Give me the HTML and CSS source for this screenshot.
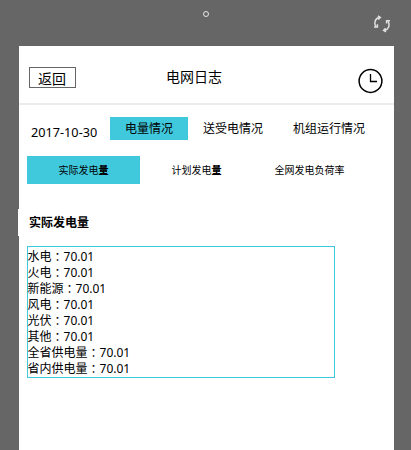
FILE: index.html
```html
<!DOCTYPE html>
<html lang="zh-CN">
<head>
<meta charset="utf-8">
<title>电网日志</title>
<link rel="stylesheet" href="styles.css">
</head>
<body>
<div class="device">
  <div class="bezel">
    <span class="camera"></span>
    <svg class="refresh" viewBox="0 0 18 18" fill="none" stroke="#e0e0e0" stroke-width="1.5">
      <path d="M6.3 2.4C2 3.2 0.8 8 2.8 11.2M1 12h3.4V9.2M4.9 0.9l2.4 1.5-2 2.2"/>
      <path d="M11.6 15.4C16 14.4 17.2 9.8 15.2 6.6M17 5.8h-3.4v2.8M13 16.9l-2.4-1.5 2-2.2"/>
    </svg>
  </div>
  <main class="screen">
    <header class="header">
      <button class="back">返回</button>
      <h1 class="title">电网日志</h1>
      <svg class="clock" viewBox="0 0 26 26" fill="none" stroke="#000">
        <circle cx="12.5" cy="13" r="11.4" stroke-width="1.5"/>
        <path d="M12.5 6v7.5h6.5" stroke-width="1.3"/>
      </svg>
    </header>
    <nav class="tabs">
      <span class="date">2017-10-30</span>
      <a class="tab active">电量情况</a>
      <a class="tab">送受电情况</a>
      <a class="tab">机组运行情况</a>
    </nav>
    <nav class="subtabs">
      <a class="subtab active">实际发电<b>量</b></a>
      <a class="subtab">计划发电<b>量</b></a>
      <a class="subtab">全网发电负荷率</a>
    </nav>
    <h2 class="heading">实际发电量</h2>
    <ul class="list">
      <li>水电<i>：</i>70.01</li>
      <li>火电<i>：</i>70.01</li>
      <li>新能源<i>：</i>70.01</li>
      <li>风电<i>：</i>70.01</li>
      <li>光伏<i>：</i>70.01</li>
      <li>其他<i>：</i>70.01</li>
      <li>全省供电量<i>：</i>70.01</li>
      <li>省内供电量<i>：</i>70.01</li>
    </ul>
  </main>
</div>
</body>
</html>
```
FILE: styles.css
```css
* { box-sizing: border-box; }
body {
  margin: 0;
  font-family: "Noto Sans", "Noto Sans CJK SC", sans-serif;
  color: #000;
  overflow: hidden;
}
.device { height: 450px; background: #666; display: flex; flex-direction: column; }
.bezel { position: relative; height: 46px; flex: none; }
.camera {
  position: absolute; left: 203px; top: 11px;
  width: 6px; height: 6px; border: 1px solid #e6e6e6; border-radius: 50%;
}
.refresh { position: absolute; left: 373px; top: 15px; width: 18px; height: 18px; }
.screen { flex: 1; margin-left: 19px; width: 375px; background: #fff; }
.header {
  height: 59px; border-bottom: 2px solid #ebebeb;
  display: grid; grid-template-columns: 47px 1fr 26px;
  padding: 0 10px; align-items: start;
}
.back {
  margin: 21px 0 0; padding: 0 1px 0 0; height: 21px; width: 47px;
  border: 1px solid #666; background: #fff; color: #000;
  font: 14px/18px "Noto Sans CJK SC", sans-serif;
}
.title {
  margin: 20px 0 0 90px; font: 14px/20px "Noto Sans CJK SC", sans-serif;
}
.clock { width: 26px; height: 26px; margin-top: 22px; }
.tabs { display: flex; padding: 12px 0 0 12px; height: 51px; font-size: 12px; white-space: nowrap; }
.date { width: 79px; font-size: 12.7px; line-height: 30px; }
.tab { height: 23px; line-height: 23px; padding: 0 15px; }
.active { background: #40c8dc; }
.subtabs { display: flex; padding-left: 8px; height: 28px; font-size: 10px; line-height: 28px; white-space: nowrap; }
.subtab { width: 113px; text-align: center; }
.subtab b { font-weight: 900; }
.heading {
  margin: 25px 0 10px -1px; padding-left: 11px; width: 200px; height: 27px;
  font-size: 12px; line-height: 27px; background: #fff;
}
.list {
  list-style: none; margin: 0 0 0 8px; padding: 2px 0 0;
  width: 308px; height: 132px; border: 1px solid #40c8dc;
  font-size: 12px; line-height: 16px;
}
.list li { margin-left: -0.5px; height: 16px; }
.list i {
  display: inline-block; width: 12px; height: 16px; line-height: 16px;
  font-style: normal; font-family: "Noto Sans CJK TC", sans-serif;
  vertical-align: top;
}
```
